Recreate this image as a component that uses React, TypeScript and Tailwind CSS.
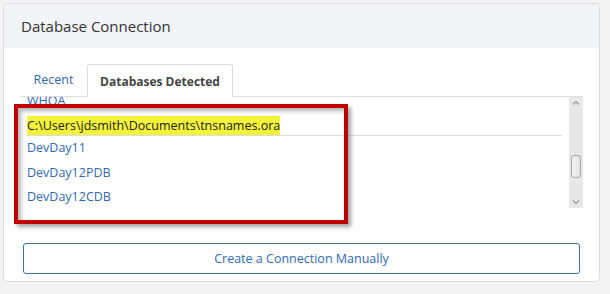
export default function App() {
  const dbs = ["DevDay11", "DevDay12PDB", "DevDay12CDB"];

  return (
    <div
      className="relative h-[294px] w-[610px] bg-[#f4f4f4] p-[3px] pr-[10px] text-[#333]"
      style={{ fontFamily: '"Open Sans", "Noto Sans", sans-serif' }}
    >
      <div className="flex h-[279px] flex-col rounded-[4px] border border-[#dcdcdc] bg-white">
        {/* Header */}
        <div className="flex h-[44px] items-center rounded-t-[4px] bg-[#f1f4f9] pl-[17px] text-[15px] text-[#333]">
          Database Connection
        </div>

        <div className="flex flex-col px-[16px] pt-[16px]">
          {/* Tabs */}
          <div className="flex h-[33px] border-b border-[#dddddd] text-[12.5px]">
            <div className="flex w-[67px] items-center justify-center pt-[1px] text-[#3169b0]">
              Recent
            </div>
            <div className="-mb-px flex w-[146px] items-center justify-center rounded-t-[3px] border border-b-0 border-[#dddddd] bg-white pt-[1px] text-[12px] font-bold text-[#444]">
              Databases Detected
            </div>
          </div>

          {/* List */}
          <div className="flex h-[111px]">
            <div className="flex-1 overflow-hidden">
              <div className="-mt-[8px] flex flex-col px-[7px] text-[12.5px]">
                <div className="flex h-[24px] items-center text-[#3169b0]">WHOA</div>
                <div className="flex h-[23px] items-end border-b border-[#dcdce2]">
                  <span className="bg-[#f3f33b] leading-[19px] text-[#222]">
                    C:\Users\jdsmith\Documents\tnsnames.ora
                  </span>
                </div>
                {dbs.map((db) => (
                  <div key={db} className="flex h-[24.5px] items-center pt-[1px] text-[#3169b0]">
                    {db}
                  </div>
                ))}
              </div>
            </div>

            {/* Scrollbar */}
            <div className="flex w-[14px] flex-col items-center bg-[#e8e8e8]">
              <svg width="10" height="10" viewBox="0 0 10 10" className="mt-[1px]">
                <path d="M2 6.5 5 3.5 8 6.5" fill="none" stroke="#9a9a9a" strokeWidth="1.2" />
              </svg>
              <div className="mt-[47px] h-[23px] w-[10px] rounded-[3px] border border-[#a8a8a8] bg-gradient-to-r from-[#f4f4f4] to-[#e2e2e2]" />
              <div className="flex-1" />
              <svg width="10" height="10" viewBox="0 0 10 10" className="mb-[1px]">
                <path d="M2 3.5 5 6.5 8 3.5" fill="none" stroke="#9a9a9a" strokeWidth="1.2" />
              </svg>
            </div>
          </div>
        </div>

        {/* Button */}
        <div className="px-[19px] pt-[35px]">
          <button className="flex h-[31px] w-full items-center justify-center rounded-[3px] border border-[#3f6fa8] bg-white pt-[1px] text-[12.5px] text-[#3169b0]">
            Create a Connection Manually
          </button>
        </div>
      </div>

      {/* Annotation box */}
      <div className="absolute left-[14px] top-[104px] h-[120px] w-[334px] border-[4px] border-[#c00000] shadow-[3px_3px_4px_rgba(0,0,0,0.35),inset_3px_3px_4px_rgba(0,0,0,0.3)]" />
    </div>
  );
}
